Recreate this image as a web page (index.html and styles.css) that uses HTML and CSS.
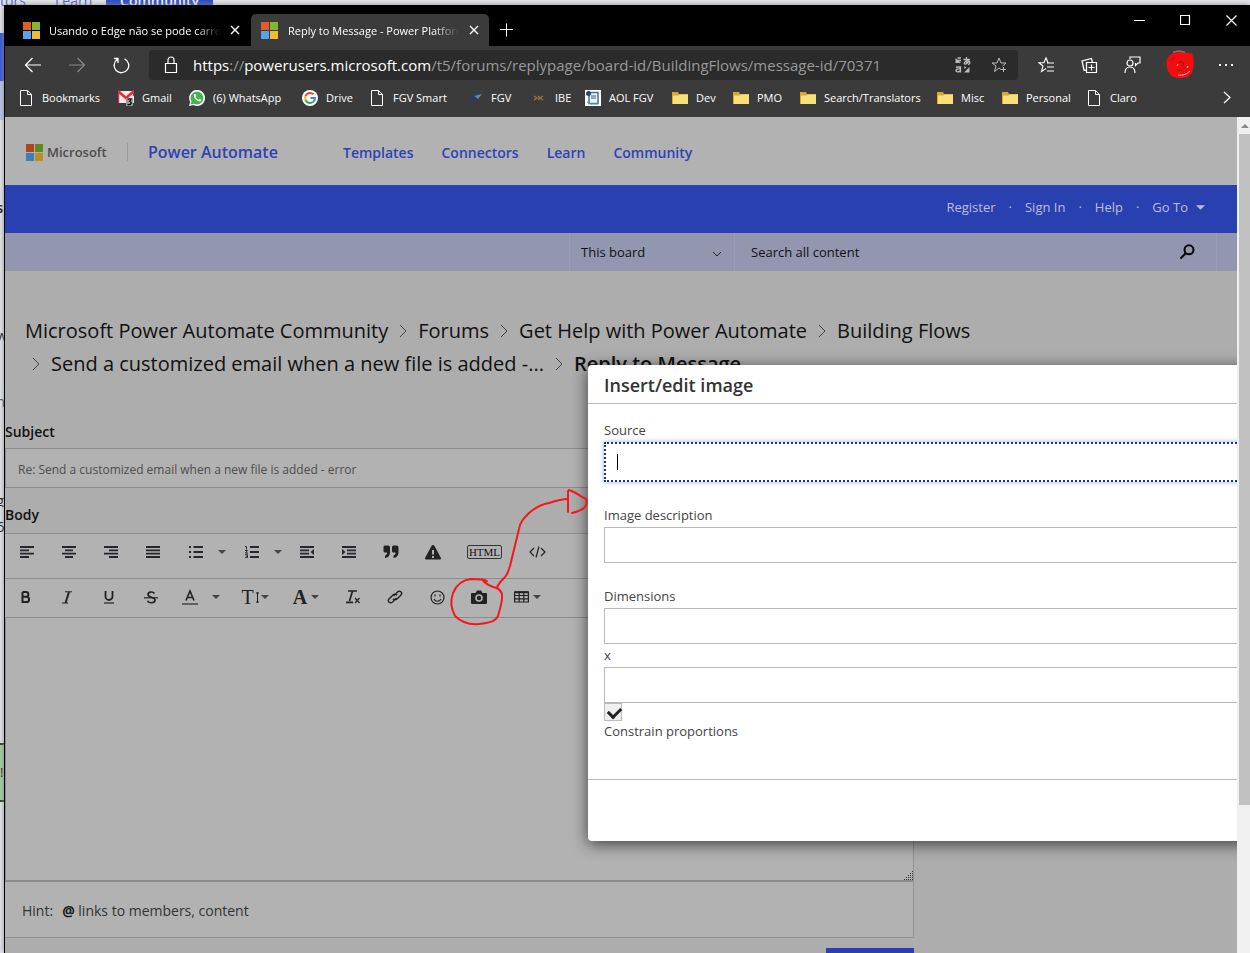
FILE: index.html
```html
<!DOCTYPE html>
<html lang="en">
<head>
<meta charset="utf-8">
<title>Reply to Message - Power Platform Community</title>
<link rel="stylesheet" href="styles.css">
</head>
<body>
<svg class="defs" aria-hidden="true">
  <symbol id="mslogo" viewBox="0 0 17 17"><path fill="#e45c25" d="M0 0h8v8H0z"/><path fill="#83b62c" d="M9 0h8v8H9z"/><path fill="#58a4ec" d="M0 9h8v8H0z"/><path fill="#eebc32" d="M9 9h8v8H9z"/></symbol>
  <symbol id="mslogo-dim" viewBox="0 0 17 17"><path fill="#ab4526" d="M0 0h8v8H0z"/><path fill="#5f8a1b" d="M9 0h8v8H9z"/><path fill="#3d7fb8" d="M0 9h8v8H0z"/><path fill="#b78f22" d="M9 9h8v8H9z"/></symbol>
  <symbol id="x" viewBox="0 0 10 10"><path d="M1 1l8 8M9 1L1 9" fill="none" stroke="currentColor" stroke-width="1.4"/></symbol>
  <symbol id="file" viewBox="0 0 16 16"><path d="M2.500.5h7l4 4v11h-11zM9.500.5v4h4" fill="none" stroke="#fff"/></symbol>
  <symbol id="folder" viewBox="0 0 16 16"><path d="M0 2h6l1 2h9v10H0z" fill="#d9a92c"/><path d="M1 5.500h5.500l1-1H16V14H1z" fill="#f8df7c"/></symbol>
  <symbol id="caret" viewBox="0 0 8 4"><path d="M0 0h8L4 4z" fill="currentColor"/></symbol>
  <symbol id="sep" viewBox="0 0 8 14"><path d="M1 1l6 6-6 6" fill="none" stroke="#444" stroke-width="1"/></symbol>
</svg>
<div class="desktop">
  <div class="behind" aria-hidden="true">
    <span class="frag frag-a">tors</span><span class="frag frag-b">Learn</span><span class="frag frag-c">Community</span>
    <span class="band band-blue"></span><span class="band band-pale"></span>
    <span class="side side-1">s</span><span class="side side-2">w</span><span class="side side-3">n</span><span class="side side-4">g</span><span class="side side-5">6</span>
    <span class="band band-green">!</span>
  </div>
  <div class="browser">
    <div class="tabs">
      <div class="tab"><svg class="i17"><use href="#mslogo"/></svg><span class="tab-title">Usando o Edge não se pode carregar</span><button class="bare" aria-label="Close tab"><svg class="i10"><use href="#x"/></svg></button></div>
      <div class="tab active"><svg class="i17"><use href="#mslogo"/></svg><span class="tab-title">Reply to Message - Power Platform Community</span><button class="bare" aria-label="Close tab"><svg class="i10"><use href="#x"/></svg></button></div>
      <button class="bare new-tab" aria-label="New tab"><svg width="14" height="14"><path d="M6.500 .5v13M0 6.500h13" stroke="#fff" fill="none"/></svg></button>
      <div class="win-controls">
        <button class="bare" aria-label="Minimize"><svg width="11" height="11"><path d="M0 5.500h11" stroke="#fff"/></svg></button>
        <button class="bare" aria-label="Maximize"><svg width="11" height="11"><path d="M.5.5h9v9h-9z" fill="none" stroke="#fff" stroke-width="1.200"/></svg></button>
        <button class="bare" aria-label="Close"><svg width="11" height="11"><path d="M.5.5l10 10M10.500.5l-10 10" stroke="#fff" stroke-width="1.200"/></svg></button>
      </div>
    </div>
    <div class="nav">
      <div class="nav-buttons">
        <button class="bare" aria-label="Back"><svg width="18" height="16"><path d="M17 8H2M8.500 1L1.500 8l7 7" fill="none" stroke="#fff" stroke-width="1.200"/></svg></button>
        <button class="bare dim" aria-label="Forward"><svg width="18" height="16"><path d="M1 8h15M9.500 1l7 7-7 7" fill="none" stroke="#888" stroke-width="1.200"/></svg></button>
        <button class="bare" aria-label="Reload"><svg width="18" height="18"><path d="M12 2.300A7.300 7.300 0 1 1 5 2.800M5.500 6.500V2h-4" transform="translate(.5 .5)" fill="none" stroke="#fff" stroke-width="1.300"/></svg></button>
      </div>
      <div class="address">
        <svg width="14" height="18"><path d="M1.500 7.500h11v9h-11zM4 7.500V4a3 3 0 0 1 6 0v3.500" fill="none" stroke="#fff" stroke-width="1.200"/></svg>
        <span class="url" role="textbox" aria-label="Address">https<i>://</i>powerusers.microsoft.com<i>/t5/forums/replypage/board-id/BuildingFlows/message-id/70371</i></span>
        <button class="bare" aria-label="Translate"><svg width="16" height="16" fill="none" stroke="#bbb" stroke-width="1.300"><path d="M8.500 2.500H15M11.500 0c-.3 3 0 5 .5 6.500M14 3.500c-.5 2-3 4-4.500 3.500C8.500 5 12 3.300 14 4.300c1.500 1 1 2.700-1 3.200M1 10h4.500v5.500M5.500 12c-3-.5-4.500.5-4.500 1.700S4 15.500 5.500 13.500M2.500 3.500H6M2.500 1H6"/><path d="M.5 6V1l5.500 5zM14.500 15.500V10L9 15.500zM9 9.500l2.500.5-2 2z" fill="#bbb" stroke="none"/></svg></button>
        <button class="bare" aria-label="Add to favorites"><svg width="17" height="16" fill="none" stroke="#bbb"><path d="M10 12.500L8 11l-4.500 3.500 1.500-5.500L1 6h5l2-5 2 5h5l-3.500 3M10 12.500h5M12.500 10v5"/></svg></button>
      </div>
      <div class="nav-tools">
        <button class="bare" aria-label="Favorites"><svg width="18" height="16" fill="none" stroke="#fff" stroke-width="1.100"><path d="M8 11.500l-4.500 3L5 9 1 5.800h5L8 .8l2 5M9 6h7M9 10h7M9 14h7"/></svg></button>
        <button class="bare" aria-label="Collections"><svg width="18" height="18" fill="none" stroke="#fff" stroke-width="1.200"><path d="M6.500 6.500h10v10h-10zM11.500 8.500v6M8.500 11.500h6M6 14l-1.800.5L2 5l9.500-2.500 1 4M4 14L2 5"/></svg></button>
        <button class="bare" aria-label="Feedback"><svg width="18" height="18" fill="none" stroke="#fff" stroke-width="1.200"><circle cx="7" cy="7" r="3"/><path d="M2 17c0-4 2-6 5-6s5 2 5 6M7 3V1h10v6h-2l-2.500 2.500V7"/></svg></button>
        <button class="bare avatar" aria-label="Profile"><svg width="30" height="30"><path d="M4 6c3-3 6-4 10-4 3-1 5 1 7 1 4-1 7 0 7 3 1 4 1 8 0 14-1 4-5 8-11 8-7 1-12-2-14-7C1 15 1 10 4 6z" fill="#f40d10"/><path d="M8 2.500c3-1.500 8-2 12 0" fill="none" stroke="#8a7370" stroke-width="1.500"/><path d="M12 20c4 1 6 0 8-3M6 11c2-3 3-3 4-4M14 13c3-3 6 0 4 3" fill="none" stroke="#8b1a16"/><path d="M13 25c5 1 9-1 12-4M22 18l1-2M12 16l1-2" stroke="#f3c9c0" fill="none"/></svg></button>
        <button class="bare" aria-label="Settings"><svg width="15" height="3"><path d="M0 0h2v2H0zM6 0h2v2H6zM12 0h2v2h-2z" fill="#fff"/></svg></button>
      </div>
    </div>
    <div class="bookmarks">
      <a href="#"><svg class="i16"><use href="#file"/></svg>Bookmarks</a>
      <a href="#"><svg class="i16" viewBox="0 0 16 16"><path d="M0 1h16v12H0z" fill="#f3e9e9"/><path d="M0 13V1l8 7 8-7v5" fill="none" stroke="#d8333a" stroke-width="2.500"/><path d="M8 8h7v8H8z" fill="#999"/><path d="M9.500 9H13l-1.500 2.500c3 .5 2 4-2 3" fill="none" stroke="#000" stroke-width="1.200"/></svg>Gmail</a>
      <a href="#"><svg class="i16" viewBox="0 0 16 16"><path d="M0 16l1.200-4A8 8 0 1 1 4.300 15z" fill="#fff"/><path d="M1.500 14.500l1-3a6.400 6.400 0 1 1 2.400 2.200z" fill="#43b64b"/><path d="M5 4c-1 3 3 8 6.500 7.500 1-.5 1-1.500.5-2l-1.500-.8-1 1C8 9.200 7 8 6.500 7l.8-1L6.500 4z" fill="#fff"/></svg>(6) WhatsApp</a>
      <a href="#"><svg class="i16" viewBox="0 0 16 16"><circle cx="8" cy="8" r="8" fill="#fff"/><g fill="none" stroke-width="2"><path d="M11.500 4.300A5 5 0 0 0 3.500 6" stroke="#ea4335"/><path d="M3.500 6a5 5 0 0 0 0 4" stroke="#fbbc05"/><path d="M3.500 10a5 5 0 0 0 7.500 2" stroke="#34a853"/><path d="M11 12a5 5 0 0 0 2-4H8.500" stroke="#4285f4"/></g></svg>Drive</a>
      <a href="#"><svg class="i16"><use href="#file"/></svg>FGV Smart</a>
      <a href="#"><svg class="i16" viewBox="0 0 16 16"><path d="M0 7h8l-2 5C5 9 3 8 0 7z" fill="#173f7d"/><path d="M7 6l8-2-4 5c-1-1-2-2-4-3z" fill="#5d89bd"/></svg>FGV</a>
      <a href="#"><svg class="i16" viewBox="0 0 16 16"><path d="M3 6l3 2-3 2M7 6l2 2-2 2M12 6L9 8l3 2" fill="none" stroke="#a8723c" stroke-width="1.200"/></svg>IBE</a>
      <a href="#"><svg class="i16" viewBox="0 0 16 16"><path d="M0 0h16v16H0z" fill="#fff"/><path d="M5 2.500h8v11H4V4z" fill="#edf4fa" stroke="#477291" stroke-width="1.500"/><path d="M6 6h5M6 8h5" stroke="#315c91"/><circle cx="3.500" cy="3.500" r="2.500" fill="#24477a"/><path d="M2 12l3 2h8" fill="none" stroke="#6ca0aa"/></svg>AOL FGV</a>
      <a href="#"><svg class="i16"><use href="#folder"/></svg>Dev</a>
      <a href="#"><svg class="i16"><use href="#folder"/></svg>PMO</a>
      <a href="#"><svg class="i16"><use href="#folder"/></svg>Search/Translators</a>
      <a href="#"><svg class="i16"><use href="#folder"/></svg>Misc</a>
      <a href="#"><svg class="i16"><use href="#folder"/></svg>Personal</a>
      <a href="#"><svg class="i16"><use href="#file"/></svg>Claro</a>
      <button class="bare more" aria-label="More bookmarks"><svg width="8" height="13"><path d="M1 1l6 5.500L1 12" fill="none" stroke="#fff" stroke-width="1.200"/></svg></button>
    </div>
    <div class="viewport">
      <div class="page">
        <header class="site-header">
          <a class="ms" href="#"><svg class="i17"><use href="#mslogo-dim"/></svg>Microsoft</a>
          <a class="product" href="#">Power Automate</a>
          <nav class="site-nav"><a href="#">Templates</a><a href="#">Connectors</a><a href="#">Learn</a><a href="#">Community</a></nav>
        </header>
        <nav class="user-bar"><a href="#">Register</a><span>·</span><a href="#">Sign In</a><span>·</span><a href="#">Help</a><span>·</span><a class="goto" href="#">Go To<svg width="9" height="5"><use href="#caret"/></svg></a></nav>
        <form class="search">
          <label class="scope"><select aria-label="Search scope"><option>This board</option></select><svg width="10" height="6"><path d="M1 1l4 4 4-4" fill="none" stroke="#222"/></svg></label>
          <input aria-label="Search" placeholder="Search all content">
          <button class="bare" type="button" aria-label="Search"><svg width="16" height="16" fill="none" stroke="#000" stroke-width="2"><circle cx="10" cy="5.800" r="4.500"/><path d="M7 9l-5.500 5.500"/></svg></button>
        </form>
        <nav class="crumbs" aria-label="Breadcrumb">
          <div><a href="#">Microsoft Power Automate Community</a><svg><use href="#sep"/></svg><a href="#">Forums</a><svg><use href="#sep"/></svg><a href="#">Get Help with Power Automate</a><svg><use href="#sep"/></svg><a href="#">Building Flows</a></div>
          <div class="second"><svg><use href="#sep"/></svg><a href="#">Send a customized email when a new file is added -...</a><svg><use href="#sep"/></svg><strong>Reply to Message</strong></div>
        </nav>
        <form class="reply">
          <label for="subject">Subject</label>
          <input id="subject" class="subject" value="Re: Send a customized email when a new file is added - error">
          <label for="body">Body</label>
          <div class="editor">
            <div class="row row-1">
              <button type="button" aria-label="Align left"><svg class="lines" viewBox="0 0 14 12"><path d="M0 1h14M0 4.300h9M0 7.600h14M0 11h9"/></svg></button>
              <button type="button" aria-label="Align center"><svg class="lines" viewBox="0 0 14 12"><path d="M0 1h14M3 4.300h8M0 7.600h14M3 11h8"/></svg></button>
              <button type="button" aria-label="Align right"><svg class="lines" viewBox="0 0 14 12"><path d="M0 1h14M5 4.300h9M0 7.600h14M5 11h9"/></svg></button>
              <button type="button" aria-label="Justify"><svg class="lines" viewBox="0 0 14 12"><path d="M0 1h14M0 4.300h14M0 7.600h14M0 11h14"/></svg></button>
              <button type="button" class="split" aria-label="Bulleted list"><svg class="lines" viewBox="0 0 14 12"><path d="M0 1h2M4.500 1H14M0 6h2M4.500 6H14M0 11h2M4.500 11H14"/></svg><svg class="caret"><use href="#caret"/></svg></button>
              <button type="button" class="split" aria-label="Numbered list"><svg class="lines" viewBox="0 0 14 12"><path d="M5 1h9M5 6h9M5 11h9"/><path class="digits" d="M0 .5h1.500v3M0 4.500h2.500L.5 7H3M0 8.700h2.500v3H0M1 10.200h1.500"/></svg><svg class="caret"><use href="#caret"/></svg></button>
              <button type="button" aria-label="Outdent"><svg class="lines" viewBox="0 0 14 12"><path d="M0 1h14M0 4.300h9M0 7.600h9M0 11h14"/><path d="M14 3v6l-3.500-3z" fill="#26262e" stroke="none"/></svg></button>
              <button type="button" aria-label="Indent"><svg class="lines" viewBox="0 0 14 12"><path d="M0 1h14M5 4.300h9M5 7.600h9M0 11h14"/><path d="M0 3v6l3.500-3z" fill="#26262e" stroke="none"/></svg></button>
              <button type="button" aria-label="Quote"><svg width="16" height="14" fill="#222"><path d="M2 .5h3q2 0 2 2V7c0 4-2 5.500-5 6v-2.500c1.500-.3 2-1.500 2-3H2q-1.500 0-1.500-1.500V2Q.5.500 2 .5zM10.500.5h3q2 0 2 2V7c0 4-2 5.500-5 6v-2.500c1.500-.3 2-1.500 2-3h-2Q9 7.500 9 6V2Q9 .5 10.500.5z"/></svg></button>
              <button type="button" aria-label="Spoiler"><svg width="16" height="15"><path d="M8 0q1 0 1.500 1L16 13q0 1.500-1 1.500H1Q0 14.500 0 13L6.500 1Q7 0 8 0z" fill="#222"/><path d="M8 5v4.500M8 11v2" stroke="#b2b2b2" stroke-width="2"/></svg></button>
              <button type="button" class="html"><span>HTML</span></button>
              <button type="button" class="code" aria-label="Source code"><svg width="17" height="12" fill="none" stroke="#222" stroke-width="1.200"><path d="M5 2L1 6l4 4M12 2l4 4-4 4M10 .5L7 11.500"/></svg></button>
            </div>
            <div class="row row-2">
              <button type="button" aria-label="Bold"><svg width="10" height="12" fill="none" stroke="#222" stroke-width="2"><path d="M1.500 1H5a2.300 2.300 0 0 1 0 4.800H1.500V1v10H5.500a2.600 2.600 0 0 0 0-5.200"/></svg></button>
              <button type="button" aria-label="Italic"><svg width="12" height="13" fill="none" stroke="#222"><path d="M4 .8h7M1 12h6"/><path d="M8 1L4.500 12" stroke-width="2"/></svg></button>
              <button type="button" aria-label="Underline"><svg width="10" height="13" fill="none" stroke="#222" stroke-width="1.800"><path d="M1.500 0v5.500a3.500 3.500 0 0 0 7 0V0"/><path d="M0 12h10" stroke-width="1.200"/></svg></button>
              <button type="button" aria-label="Strikethrough"><svg width="14" height="13" fill="none" stroke="#222" stroke-width="1.700"><path d="M10.500 2.500C9 .3 4 .5 4 3.500c0 3.500 7 2 7 5.500 0 3.500-6 3.500-7.500.8"/><path d="M0 6.800h14" stroke-width="1.200"/></svg></button>
              <button type="button" class="color" aria-label="Text color"><svg width="16" height="16" fill="none" stroke="#222" stroke-width="1.600"><path d="M4 11.500L8 2l4 9.500M5.500 8.500h5"/><path d="M0 15h16" stroke="#444" stroke-width="1.500"/></svg><svg class="caret"><use href="#caret"/></svg></button>
              <button type="button" class="size" aria-label="Font size"><span class="serif">T</span><svg width="5" height="13" fill="none" stroke="#222"><path d="M2.500 1v11M1 2h3M1 11h3"/></svg><svg class="caret"><use href="#caret"/></svg></button>
              <button type="button" class="family" aria-label="Font family"><span class="serif bold">A</span><svg class="caret"><use href="#caret"/></svg></button>
              <button type="button" aria-label="Clear formatting"><svg width="16" height="14" fill="none" stroke="#222" stroke-width="1.700"><path d="M3 1h9M7.500 1L4.500 11M1 12.300h7"/><path d="M10 8l4.500 5M14.500 8L10 13" stroke-width="1.200"/></svg></button>
              <button type="button" aria-label="Link"><svg width="16" height="14" fill="none" stroke="#222" stroke-width="1.400"><path d="M6.500 6l4-4c2.300-2 5.500.5 3.500 3L10 9c-1.200 1-3 1-4-.3M9.500 8l-4 4C3.200 14 0 11.500 2 9l4-4c1.200-1 3-1 4 .3"/></svg></button>
              <button type="button" aria-label="Emoticons"><svg width="15" height="15" fill="none" stroke="#222" stroke-width="1.200"><circle cx="7.500" cy="7.500" r="6.500"/><path d="M4 9c1.500 3 5.500 3 7 0M5 4.500v2M10 4.500v2"/></svg></button>
              <button type="button" aria-label="Photos"><svg width="16" height="14"><path d="M1 3h3.500L6 .5h4L11.500 3H15q1 0 1 1v9q0 1-1 1H1q-1 0-1-1V4q0-1 1-1z" fill="#222"/><circle cx="8" cy="8" r="3" fill="none" stroke="#b2b2b2" stroke-width="1.600"/></svg></button>
              <button type="button" class="table" aria-label="Table"><svg width="15" height="12" fill="none" stroke="#222" stroke-width="1.200"><path d="M.6 1h13.800v10H.6zM.6 4.500h13.800M.6 7.800h13.800M5.200 1v10M9.800 1v10"/><path d="M.6 1.200h13.800" stroke-width="2"/></svg><svg class="caret"><use href="#caret"/></svg></button>
            </div>
            <div class="area"><textarea id="body"></textarea><svg width="10" height="10" class="grip"><path d="M9.500 1v9M7.500 3v7M5.500 5v5M3.500 7v3M1.500 9v1" stroke="#333" stroke-dasharray="1 1"/></svg></div>
            <div class="hint">Hint:<span><b>@</b> links to members, content</span></div>
          </div>
          <button type="button" class="post" aria-label="Post"></button>
        </form>
        <section class="dialog" role="dialog" aria-labelledby="dlg">
          <h2 id="dlg">Insert/edit image</h2>
          <div class="fields">
            <label for="src">Source</label>
            <div class="source"><input id="src"><span class="cursor"></span></div>
            <label for="desc">Image description</label>
            <input id="desc" class="last">
            <label for="w">Dimensions</label>
            <input id="w">
            <label class="by" for="h">x</label>
            <input id="h">
            <input type="checkbox" id="con" checked>
            <label class="constrain" for="con">Constrain proportions</label>
          </div>
          <footer></footer>
        </section>
      </div>
      <div class="scrollbar"><svg width="8" height="4"><path d="M0 4h8L4 0z" fill="#8a8a8a"/></svg><div class="thumb"></div></div>
    </div>
  </div>
  <svg class="note" width="150" height="150" fill="none" stroke="#f5161b" stroke-width="2" stroke-linecap="round" stroke-linejoin="round"><path d="M40 96C37 94 32 94 24 94c-10 1-15 7-18 14-3 9-2 15 2 23 6 6 14 9 24 8 9-1 16-2 19-8 2-7 5-16 4-22-1-3-3-5-5-6-6-1-13-5-15-9"/><path d="M50 102c2-4 5-7 7-9 4-3 4-7 6-12 3-12 6-25 9-37 1-7 5-11 10-16 6-5 12-9 20-10 6-2 12-4 19-4"/><path d="M121 6v21M122 5c6 2 10 5 15 8 4 1 3 6 1 9-3 3-8 5-13 6"/></svg>
</div>
</body>
</html>
```
FILE: styles.css
```css
* { box-sizing: border-box; }
body { margin: 0; font-family: "Open Sans", "Noto Sans", sans-serif; font-size: 13px; color: #111; }
a { color: inherit; text-decoration: none; }
button, input, select, textarea { font: inherit; color: inherit; border-radius: 0; }
.bare { border: 0; background: none; padding: 0; display: flex; align-items: center; justify-content: center; color: #fff; }
svg { display: block; flex: none; }
.defs { position: absolute; width: 0; height: 0; }
.i17 { width: 17px; height: 17px; }
.i16 { width: 16px; height: 16px; }
.i10 { width: 10px; height: 10px; }

.desktop { position: relative; height: 100vh; overflow: hidden; padding: 5px 0 0 4px; background: #e6e8ee; display: flex; }
.behind span { position: absolute; line-height: 14px; }
.frag { top: -6px; font-size: 14px; color: #4a62cf; }
.frag-a { left: 0; }
.frag-b { left: 55px; }
.frag-c { left: 106px; width: 107px; text-align: center; background: #2b4bc8; color: #fff; font-weight: 600; }
.band { left: 0; width: 4px; }
.band-blue { top: 33px; height: 48px; background: #2f55dd; }
.band-pale { top: 81px; height: 39px; background: #bcc5ea; }
.behind .band-green { top: 743px; height: 59px; border: solid #1c3d1c; border-width: 2px 0; background: #a4cfa6; line-height: 55px; }
.side { left: -4px; width: 8px; overflow: hidden; font-size: 15px; }
.side-1 { top: 200px; font-weight: 600; }
.side-2 { top: 328px; }
.side-3 { top: 394px; color: #356; }
.side-4 { top: 493px; }
.side-5 { top: 519px; }

.browser { position: relative; flex: 1; min-width: 0; display: flex; flex-direction: column; border-left: 1px solid #000; background: #3b3b3b; color: #fff; box-shadow: 0 0 6px #888; }
.tabs { height: 41px; background: #000; display: flex; align-items: flex-end; font-size: 12px; }
.tab { height: 32px; display: flex; align-items: center; width: 246px; padding: 0 11px 0 18px; gap: 9px; }
.tab.active { width: 238px; padding: 0 10px 0 10px; gap: 10px; background: #3b3b3b; border-radius: 5px 5px 0 0; }
.tab-title { flex: 1; overflow: hidden; white-space: nowrap; font-size: 11px; mask-image: linear-gradient(90deg, #000 85%, transparent); }
.new-tab { height: 32px; margin-left: 11px; }
.win-controls { display: flex; gap: 35px; margin-left: auto; padding-right: 13px; align-self: flex-start; height: 30px; }
.nav { height: 38px; display: flex; align-items: center; }
.nav-buttons { width: 144px; display: flex; gap: 26px; padding-left: 19px; }
.address { flex: 1; height: 30px; display: flex; align-items: center; gap: 20px; padding: 0 10px 0 15px; background: #2b2b2b; border-radius: 3px; min-width: 0; }
.url { flex: 1; margin-right: -4px; font-size: 15px; white-space: nowrap; overflow: hidden; margin-left: -5px; }
.url i { font-style: normal; color: #999; }
.nav-tools { width: 232px; display: flex; align-items: center; justify-content: space-between; padding: 0 16px 0 20px; }
.bookmarks { height: 33px; display: grid; grid-template-columns: 100px 71px 113px 67px 98px 64px 54px 87px 61px 67px 137px 65px 84px 1fr 24px; align-items: center; padding: 0 11px 6px 13px; font-size: 11px; }
.bookmarks a { display: flex; align-items: center; gap: 8px; white-space: nowrap; }

.viewport { flex: 1; min-height: 0; display: flex; }
.page { position: relative; flex: 1; min-width: 0; overflow: hidden; background: #adadad; color: #111; }
.site-header { height: 68px; background: #b2b2b2; display: flex; align-items: center; padding: 2px 0 0 21px; color: #2d43b4; }
.ms { display: flex; align-items: center; gap: 4px; width: 102px; padding-right: 22px; border-right: 1px solid #999; color: #4d4d4d; font-size: 13px; font-weight: 600; }
.product { width: 215px; padding-left: 20px; font-size: 16px; font-weight: 600; }
.site-nav { display: flex; gap: 28px; font-size: 14px; font-weight: 600; }
.user-bar { height: 48px; background: #2941b0; color: #b9bfdc; display: flex; align-items: center; justify-content: flex-end; gap: 13px; padding: 0 32px 4px 0; }
.goto { display: flex; align-items: center; gap: 8px; }
.search { height: 38px; background: #9297af; display: grid; grid-template-columns: minmax(0, 564px) 166px minmax(0, 1fr) 60px; align-items: stretch; padding-right: 20px; }
.scope { grid-column: 2; display: grid; align-items: center; border: solid #9b9db0; border-width: 0 1px; }
.scope select, .scope svg { grid-area: 1 / 1; }
.scope select { appearance: none; border: 0; background: none; padding: 0 11px; height: 38px; }
.scope svg { justify-self: end; margin: 4px 12px 0 0; }
.search input { border: 0; background: none; padding: 0 16px; }
.search input::placeholder { color: #111; opacity: 1; }
.search .bare { border-right: 1px solid #9b9db0; }
.crumbs { padding: 43px 20px 0; font-size: 20px; line-height: 33px; white-space: nowrap; }
.crumbs div { display: flex; align-items: center; gap: 11px; }
.crumbs .second { padding-left: 7px; }
.crumbs svg { width: 8px; height: 14px; }
.crumbs strong { font-weight: 600; }
.reply { width: 909px; max-width: 100%; padding-top: 40px; }
.reply label { display: block; font-size: 14px; font-weight: 600; line-height: 24px; padding-bottom: 4px; }
.subject { display: block; width: 100%; height: 40px; margin-bottom: 15px; padding: 2px 12px 0; border: 1px solid #8c8c8c; background: #b2b2b2; color: #4d4d4d; font-size: 12px; }
.reply .subject + label { padding-bottom: 6px; }
.editor { border: solid #939393; border-width: 1px 1px 1px 0; background: #b2b2b2; }
.row { display: flex; }
.row-1 { height: 44px; padding: 0 0 8px 1px; }
.row-2 { height: 39px; border-top: 1px solid #8c8c8c; padding-bottom: 2px; }
.row button { width: 42px; border: 0; padding: 0; background: none; display: flex; align-items: center; justify-content: center; }
.row .split { width: 56px; justify-content: flex-start; padding-left: 15px; gap: 15px; }
.lines { width: 14px; height: 12px; fill: none; stroke: #26262e; stroke-width: 1.8; }
.digits { stroke-width: 1; }
.caret { width: 8px; height: 4px; color: #444; }
.row .html { width: 61px; }
.row .code { width: 44px; }
.html span { border: 1px solid #333; border-radius: 2px; font: 11px/12px "Liberation Serif", serif; padding: 0 1px; }
.row-2 button:first-child { width: 41px; }
.row .color { width: 58px; gap: 14px; }
.row .size { width: 50px; gap: 1px; }
.row .family { width: 52px; gap: 4px; }
.row .table { width: 54px; gap: 4px; }
.serif { font: 20px/20px "Liberation Serif", serif; color: #222; }
.bold { font-weight: 700; }
.area { position: relative; border: solid #8c8c8c; border-width: 1px 0 2px 1px; }
.area textarea { display: block; width: 100%; height: 262px; border: 0; background: none; resize: none; }
.grip { position: absolute; right: 0; bottom: 0; }
.hint { height: 55px; display: flex; align-items: center; gap: 9px; padding: 2px 0 0 17px; font-size: 14px; color: #333; }
.hint b { color: #111; }
.post { display: block; width: 88px; height: 38px; margin: 10px 0 0 auto; border: 0; background: #2941b0; }

.dialog { position: absolute; left: 583px; top: 248px; right: -20px; background: #fff; border-radius: 4px; box-shadow: 0 3px 16px rgba(0, 0, 0, .65); color: #444; }
.dialog h2 { margin: 0; padding: 2px 16px 0; height: 39px; line-height: 36px; font-size: 18px; font-weight: 600; border-bottom: 1px solid #bbb; color: #333; }
.fields { padding: 14px 16px 37px; }
.fields label { display: block; line-height: 24px; }
.fields input:not([type]) { display: block; width: 100%; height: 36px; border: 1px solid #b8b8b8; padding: 0 12px; }
.fields .source { position: relative; margin-bottom: 21px; }
.fields .source input:not([type]) { height: 40px; border: 2px dotted #1c2a9c; outline: 0; box-shadow: 0 0 5px #8ab0e8; }
.cursor { position: absolute; left: 13px; top: 12px; width: 1px; height: 16px; background: #000; }
.fields .last { margin-bottom: 21px; }
.fields .by { line-height: 23px; }
.fields .constrain { line-height: 21px; }
.fields input[type=checkbox] { appearance: none; display: block; width: 18px; height: 18px; margin: 0; border: 1px solid #bbb; background: #efefef; }
.fields input[type=checkbox]::after { content: ""; display: block; width: 6px; height: 10px; margin: 1px 5px; border: solid #222; border-width: 0 3px 3px 0; transform: rotate(45deg); }
.dialog footer { height: 62px; border-top: 1px solid #bbb; }
.scrollbar { width: 13px; background: #f0f0f0; padding: 7px 0 0 2px; overflow: hidden; }
.scrollbar svg { margin-left: 2px; }
.thumb { height: 81%; margin-top: 6px; background: #c1c1c1; }
.note { position: absolute; left: 447px; top: 485px; }
```
